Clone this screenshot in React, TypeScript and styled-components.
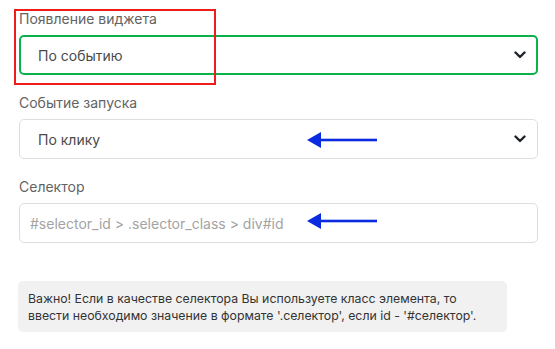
import React from 'react';
import styled, { createGlobalStyle } from 'styled-components';

const GlobalStyle = createGlobalStyle`
  body {
    margin: 0;
    background: #fff;
    font-family: Inter, "Noto Sans", sans-serif;
  }
`;

const Page = styled.div`
  position: relative;
  width: 555px;
  height: 349px;
  padding: 10px 17px 0 19px;
  box-sizing: border-box;
`;

const Group = styled.div`
  display: flex;
  flex-direction: column;
  margin-bottom: 19px;
`;

const Label = styled.div`
  font-size: 14px;
  line-height: 17px;
  color: #636363;
  margin-bottom: 8px;
`;

const SelectBox = styled.div<{ active?: boolean }>`
  display: flex;
  align-items: center;
  justify-content: space-between;
  height: 40px;
  box-sizing: border-box;
  border: ${({ active }) => (active ? '2px solid #0db14b' : '1px solid #dedede')};
  border-radius: 5px;
  padding: ${({ active }) => (active ? '0 10px 0 17px' : '0 11px 0 18px')};
  font-size: 14px;
  color: #4a4a4a;
`;

const TextInput = styled.input`
  height: 40px;
  box-sizing: border-box;
  border: 1px solid #dedede;
  border-radius: 5px;
  padding: 0 10px;
  font-family: inherit;
  font-size: 14px;
  color: #4a4a4a;
  outline: none;

  &::placeholder {
    color: #a3a3a3;
  }
`;

const Note = styled.div`
  margin-top: 38px;
  width: 489px;
  margin-left: -1px;
  box-sizing: border-box;
  background: #f1f1f1;
  border-radius: 5px;
  padding: 9px 10px 8px;
  font-size: 12.3px;
  line-height: 17px;
  color: #333;
`;

const Highlight = styled.div`
  position: absolute;
  left: 14px;
  top: 9px;
  width: 202px;
  height: 76px;
  box-sizing: border-box;
  border: 2px solid #ee1c1c;
  pointer-events: none;
`;

const Pointer = styled.svg<{ top: number }>`
  position: absolute;
  left: 306px;
  top: ${({ top }) => top}px;
`;

const Chevron = () => (
  <svg width="12" height="8" viewBox="0 0 12 8">
    <polyline points="1.5,1.5 6,6 10.5,1.5" fill="none" stroke="#1f2328" strokeWidth="2.4" strokeLinecap="round" strokeLinejoin="round" />
  </svg>
);

const Arrow = ({ top }: { top: number }) => (
  <Pointer top={top} width="72" height="18" viewBox="0 0 72 18">
    <polygon points="1,9 15,1 15,17" fill="#0b2be0" />
    <rect x="12" y="7.7" width="59" height="2.6" fill="#0b2be0" />
  </Pointer>
);

export default function App() {
  return (
    <>
      <GlobalStyle />
      <Page>
        <Group>
          <Label>Появление виджета</Label>
          <SelectBox active>
            <span>По событию</span>
            <Chevron />
          </SelectBox>
        </Group>
        <Group>
          <Label>Событие запуска</Label>
          <SelectBox>
            <span>По клику</span>
            <Chevron />
          </SelectBox>
        </Group>
        <Group>
          <Label>Селектор</Label>
          <TextInput placeholder="#selector_id > .selector_class > div#id" />
        </Group>
        <Note>
          Важно! Если в качестве селектора Вы используете класс элемента, то
          ввести необходимо значение в формате '.селектор', если id - '#селектор'.
        </Note>
        <Highlight />
        <Arrow top={131} />
        <Arrow top={212} />
      </Page>
    </>
  );
}
